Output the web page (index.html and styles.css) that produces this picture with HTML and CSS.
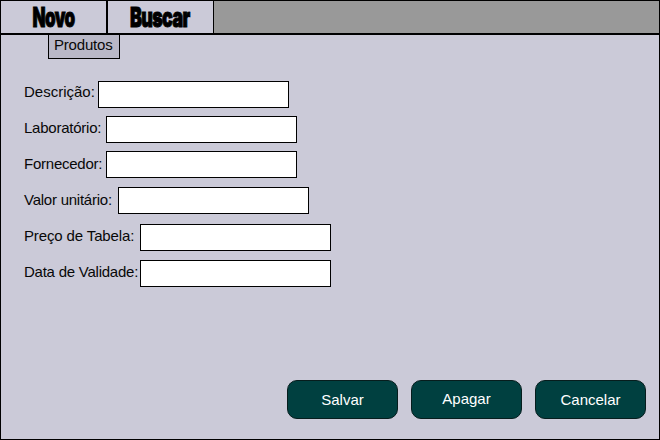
FILE: index.html
```html
<!DOCTYPE html>
<html lang="pt-BR">
<head>
<meta charset="utf-8">
<title>Produtos</title>
<link rel="stylesheet" href="styles.css">
</head>
<body>
<main class="window">
  <nav class="tabs">
    <div class="tab tab-new"><svg width="106" height="32"><text x="31.5" y="25.6" textLength="42" lengthAdjust="spacingAndGlyphs">Novo</text></svg></div>
    <div class="tab tab-search"><svg width="105" height="32"><text x="22" y="25.6" textLength="59.5" lengthAdjust="spacingAndGlyphs">Buscar</text></svg></div>
  </nav>
  <div class="submenu">Produtos</div>
  <form class="form">
    <div class="row"><label class="w-desc" for="f1">Descrição:</label><input id="f1" class="up-0"></div>
    <div class="row"><label class="w-lab tight" for="f2">Laboratório:</label><input id="f2" class="up-1"></div>
    <div class="row"><label class="w-lab tight" for="f3">Fornecedor:</label><input id="f3" class="up-2"></div>
    <div class="row"><label class="w-value tight" for="f4">Valor unitário:</label><input id="f4" class="up-2"></div>
    <div class="row"><label class="w-wide" for="f5">Preço de Tabela:</label><input id="f5" class="up-1"></div>
    <div class="row"><label class="w-wide tight" for="f6">Data de Validade:</label><input id="f6" class="up-1"></div>
  </form>
  <footer class="actions">
    <button type="button">Salvar</button>
    <button type="button" class="raised">Apagar</button>
    <button type="button">Cancelar</button>
  </footer>
</main>
</body>
</html>
```

FILE: styles.css
```css
* { box-sizing: border-box; }
body { margin: 0; font: 15px/18px "Liberation Sans", Arial, sans-serif; color: #080808; }
.window {
  width: 660px;
  height: 440px;
  display: flex;
  flex-direction: column;
  border: 1px solid #000;
  background: #cbcad8;
}
.tabs { display: flex; height: 34px; background: #999; border-bottom: 2px solid #000; }
.tab { height: 32px; background: #cbcad8; }
.tab-new { width: 107px; border-right: 2px solid #000; }
.tab-search { width: 106px; border-right: 1px solid #000; }
.tab svg { display: block; overflow: visible; }
.tab text { font: 900 27.5px Inter, sans-serif; letter-spacing: -1px; fill: #000; stroke: #000; stroke-width: 1px; }
.submenu {
  width: 72px;
  height: 25px;
  margin: -1px 0 0 47px;
  padding: 1px 0 0 5px;
  border: 1px solid #000;
  background: #b9b8c7;
  letter-spacing: -.2px;
  white-space: nowrap;
}
.form { margin: 22px 0 0 23px; }
.row { display: flex; height: 36px; }
.row label { padding-top: 2px; white-space: nowrap; letter-spacing: -.13px; }
.row .tight { letter-spacing: -.24px; }
.row .w-desc { width: 74px; letter-spacing: 0; }
.w-lab { width: 82px; }
.w-value { width: 94px; }
.w-wide { width: 116px; }
.row input {
  width: 191px;
  height: 27px;
  padding: 0 4px;
  border: 1px solid #000;
  border-radius: 0;
  background: #fff;
  font: inherit;
}
.up-0 { margin: 0; }
.up-1 { margin: -1px 0 0; }
.up-2 { margin: -2px 0 0; }
.actions { display: flex; gap: 13px; margin: 83px 0 0 286px; }
.actions button {
  width: 111px;
  height: 39px;
  padding: 1px 0 0;
  border: 1px solid #061d1d;
  border-radius: 10px;
  background: #004040;
  color: #fff;
  font: inherit;
}
.actions .raised { padding: 0 0 1px; }
```
